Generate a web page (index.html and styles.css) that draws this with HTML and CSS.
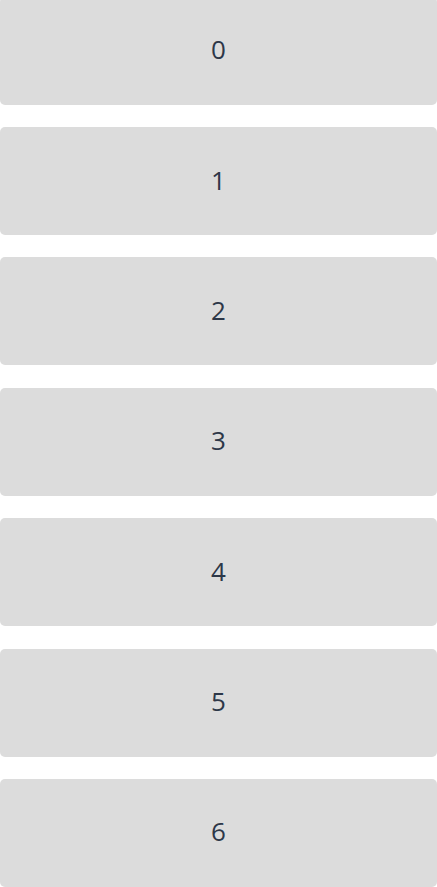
FILE: index.html
```html
<!DOCTYPE html>
<html lang="en">
<head>
<meta charset="utf-8">
<title>List</title>
<link rel="stylesheet" href="styles.css">
</head>
<body>
<div class="list">
  <div class="item">0</div>
  <div class="item">1</div>
  <div class="item">2</div>
  <div class="item">3</div>
  <div class="item">4</div>
  <div class="item">5</div>
  <div class="item">6</div>
</div>
</body>
</html>
```

FILE: styles.css
```css
html, body {
  margin: 0;
  padding: 0;
  background: #ffffff;
  overflow: hidden;
}

.list {
  display: flex;
  flex-direction: column;
  gap: 22.4px;
  margin-top: -3.4px;
}

.item {
  height: 108px;
  box-sizing: border-box;
  padding-bottom: 3px;
  flex: none;
  background: #dcdcdc;
  border-radius: 5px;
  display: flex;
  align-items: center;
  justify-content: center;
  font-family: "Open Sans", sans-serif;
  font-size: 26px;
  color: #2d3748;
}
```
